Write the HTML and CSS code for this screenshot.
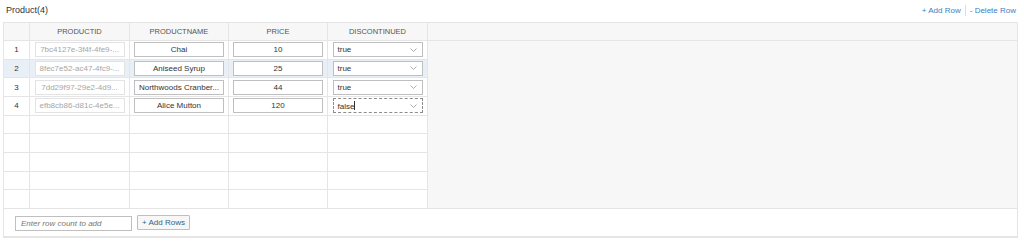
FILE: index.html
```html
<!DOCTYPE html>
<html lang="en">
<head>
    <meta charset="UTF-8">
    <meta name="viewport" content="width=device-width, initial-scale=1.0">
    <title>Product</title>
    <link rel="stylesheet" href="styles.css">
</head>
<body>
    <div class="toolbar">
        <span class="title">Product(4)</span>
        <div class="actions">
            <a class="action">+ Add Row</a>
            <span class="sep"></span>
            <a class="action">- Delete Row</a>
        </div>
    </div>

    <div class="panel">
        <div class="grid">
            <!-- header -->
            <div class="cell head"></div>
            <div class="cell head">PRODUCTID</div>
            <div class="cell head">PRODUCTNAME</div>
            <div class="cell head">PRICE</div>
            <div class="cell head">DISCONTINUED</div>
            <div class="cell head filler-head"></div>

            <div class="filler"></div>

            <!-- data rows -->
            <div class="cell num">1</div>
            <div class="cell"><div class="box disabled">7bc4127e-3f4f-4fe9-...</div></div>
            <div class="cell"><div class="box">Chai</div></div>
            <div class="cell"><div class="box">10</div></div>
            <div class="cell"><div class="box select"><span>true</span><svg width="7" height="4" viewBox="0 0 7 4"><polyline points="0.5,0.5 3.5,3.5 6.5,0.5" fill="none" stroke="#9a9a9a" stroke-width="0.8"/></svg></div></div>

            <div class="cell num sel">2</div>
            <div class="cell sel"><div class="box disabled">8fec7e52-ac47-4fc9-...</div></div>
            <div class="cell sel"><div class="box">Aniseed Syrup</div></div>
            <div class="cell sel"><div class="box">25</div></div>
            <div class="cell sel"><div class="box select"><span>true</span><svg width="7" height="4" viewBox="0 0 7 4"><polyline points="0.5,0.5 3.5,3.5 6.5,0.5" fill="none" stroke="#9a9a9a" stroke-width="0.8"/></svg></div></div>

            <div class="cell num">3</div>
            <div class="cell"><div class="box disabled">7dd29f97-29e2-4d9...</div></div>
            <div class="cell"><div class="box">Northwoods Cranber...</div></div>
            <div class="cell"><div class="box">44</div></div>
            <div class="cell"><div class="box select"><span>true</span><svg width="7" height="4" viewBox="0 0 7 4"><polyline points="0.5,0.5 3.5,3.5 6.5,0.5" fill="none" stroke="#9a9a9a" stroke-width="0.8"/></svg></div></div>

            <div class="cell num">4</div>
            <div class="cell"><div class="box disabled">efb8cb86-d81c-4e5e...</div></div>
            <div class="cell"><div class="box">Alice Mutton</div></div>
            <div class="cell"><div class="box">120</div></div>
            <div class="cell"><div class="box select focused"><span>false<i class="caret"></i></span><svg width="7" height="4" viewBox="0 0 7 4"><polyline points="0.5,0.5 3.5,3.5 6.5,0.5" fill="none" stroke="#9a9a9a" stroke-width="0.8"/></svg></div></div>

            <!-- empty rows -->
            <div class="cell num"></div><div class="cell"></div><div class="cell"></div><div class="cell"></div><div class="cell"></div>
            <div class="cell num"></div><div class="cell"></div><div class="cell"></div><div class="cell"></div><div class="cell"></div>
            <div class="cell num"></div><div class="cell"></div><div class="cell"></div><div class="cell"></div><div class="cell"></div>
            <div class="cell num"></div><div class="cell"></div><div class="cell"></div><div class="cell"></div><div class="cell"></div>
            <div class="cell num"></div><div class="cell"></div><div class="cell"></div><div class="cell"></div><div class="cell"></div>
        </div>

        <div class="footer">
            <div class="count-input">Enter row count to add</div>
            <button class="add-rows">+ Add Rows</button>
        </div>
    </div>
</body>
</html>
```

FILE: styles.css
```css
body {
    margin: 0;
    font-family: "Liberation Sans", Arial, sans-serif;
    color: #333;
    background: #fff;
}
.toolbar {
    display: flex;
    justify-content: space-between;
    align-items: center;
    height: 20px;
    padding: 0 8px 2px 6px;
}
.title {
    font-size: 9px;
    color: #333;
}
.actions {
    display: flex;
    align-items: center;
    font-size: 8px;
}
.action {
    color: #3b7fc4;
    cursor: pointer;
}
.sep {
    width: 1px;
    height: 11px;
    background: #ddd;
    margin: 0 4px;
}
.panel {
    margin: 0 6px 0 3px;
    border: 1px solid #e5e5e5;
    border-bottom-width: 2px;
}
.grid {
    display: grid;
    grid-template-columns: 26px 100px 99px 99px 100px 1fr;
    grid-template-rows: 18px repeat(9, 18.67px);
}
.cell {
    display: flex;
    align-items: center;
    justify-content: center;
    border-right: 1px solid #e5e5e5;
    border-bottom: 1px solid #e5e5e5;
    background: #fff;
    font-size: 8px;
    min-width: 0;
}
.head {
    background: #f7f7f7;
    color: #555;
    font-size: 7.5px;
}
.filler-head {
    border-right: none;
}
.filler {
    grid-column: 6;
    grid-row: 2 / span 9;
    background: #f7f7f7;
    border-bottom: 1px solid #e5e5e5;
}
.num {
    color: #333;
}
.sel {
    background: #e8eff6;
}
.box {
    box-sizing: border-box;
    width: 90px;
    height: 15px;
    border: 1px solid #bfbfbf;
    background: #fff;
    display: flex;
    align-items: center;
    justify-content: center;
    white-space: nowrap;
    overflow: hidden;
    color: #333;
}
.box.disabled {
    border-color: #e3e3e3;
    color: #a6a6a6;
}
.box.select {
    justify-content: space-between;
    padding: 0 4px 0 4px;
}
.box.select svg {
    margin-right: 1px;
}
.box.focused {
    border: 1px dashed #8c8c8c;
}
.caret {
    display: inline-block;
    width: 1px;
    height: 9px;
    background: #333;
    vertical-align: -1px;
}
.footer {
    display: flex;
    align-items: center;
    gap: 5px;
    height: 27px;
    padding: 0 0 0 11px;
}
.count-input {
    box-sizing: border-box;
    width: 117px;
    height: 15px;
    border: 1px solid #bfbfbf;
    font-size: 8px;
    font-style: italic;
    color: #777;
    display: flex;
    align-items: center;
    padding-left: 5px;
    margin-top: 2px;
}
.add-rows {
    box-sizing: border-box;
    height: 15px;
    padding: 0 4px;
    border: 1px solid #bfbfbf;
    border-radius: 1px;
    background: #f7f7f7;
    font-family: "Liberation Sans", Arial, sans-serif;
    font-size: 8px;
    color: #346187;
    cursor: pointer;
}
```
